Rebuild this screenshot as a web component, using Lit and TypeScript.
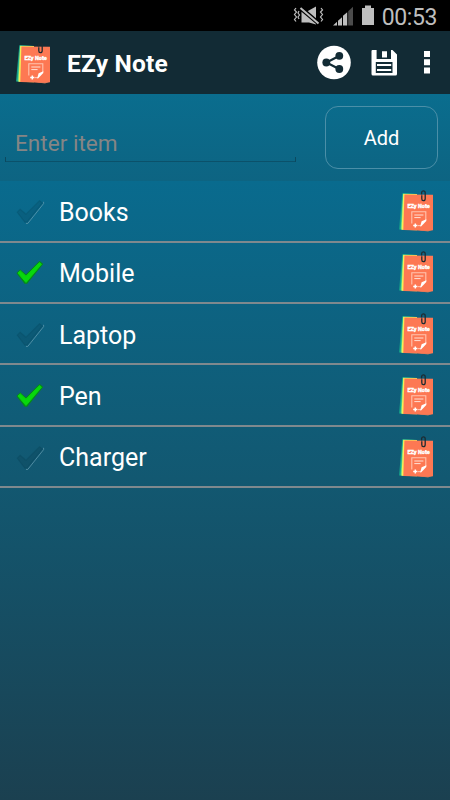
import { LitElement, html, css, svg } from "lit";
import { customElement, property, state } from "lit/decorators.js";

@customElement("note-icon")
class NoteIcon extends LitElement {
  static styles = css`
    :host { display: block; width: 38px; height: 48px; flex: none; }
    svg { display: block; }
    .label { font: 900 6px Roboto, sans-serif; fill: #fff; stroke: #fff; stroke-width: 0.3; }
  `;
  render() {
    return html`<svg width="38" height="48" viewBox="0 0 38 48">
      <path d="M5.3 6.2 L20 7 L20 43 L2 42.4Z" fill="#16a08a" />
      <path d="M6 6.6 L20 7 L20 43 L3.6 42.4Z" fill="#5fd68a" />
      <path d="M6.2 7 L20 7 L20 43.2 L4.6 42.8Z" fill="#f6ee58" />
      <path d="M20 43 L35 43 L31 44.6Z" fill="#b07a62" />
      <path d="M7.4 7.4 L36 7.7 L36 43.2 Q30 44.2 22 43.6 L6.3 43Z" fill="#fd7853" />
      <text class="label" x="10.4" y="20.8" textLength="22.4" lengthAdjust="spacingAndGlyphs">EZy Note</text>
      <path d="M14.8 36.5 V24.8 H28.8 V33" fill="none" stroke="#ffc4b0" stroke-width="1.1" />
      <path d="M21 38.6 H24" stroke="#ffc4b0" stroke-width="1.1" />
      <path d="M17.3 28 H26.4 M17.3 30.6 H23.6" stroke="#ffe0d5" stroke-width="1" />
      <path d="M29.3 32.2 L29.3 34 L24 39.4 L23.2 39.2 L24.6 34.2Z" fill="#fff" />
      <path d="M18.3 36.4 V40.6 M16.2 38.5 H20.4" stroke="#fff" stroke-width="1.5" />
      <path d="M24.6 7.5 V5.8 Q24.6 3.9 26.3 3.9 Q28.2 3.9 28.2 5.8 V11.8 Q28.2 13.7 26.3 13.7 Q24.8 13.7 24.8 11.8 V8.2" fill="none" stroke="#1d2b31" stroke-width="1.3" />
    </svg>`;
  }
}

@customElement("check-mark")
class CheckMark extends LitElement {
  @property({ type: Boolean }) done = false;
  static styles = css`
    :host { display: block; width: 30px; height: 26px; flex: none; }
    svg { display: block; }
  `;
  render() {
    const shape = "M2.2 13.2 L5.2 10.2 L11 15.2 L24.6 1.6 L27.4 4 L12 23.2 L9.8 23.2Z";
    return html`<svg width="30" height="26" viewBox="0 0 30 26">
      ${this.done
        ? svg`
          <path d=${shape} fill="#078a1c" stroke="#078a1c" stroke-width="1.2" stroke-linejoin="round" />
          <path d="M3 13 L5.3 10.9 L11 16.2 L24.5 2.6 L26.4 4.2 L11 22.4Z" fill="#08d80c" stroke="#08d80c" stroke-width="1" stroke-linejoin="round" />`
        : svg`
          <path d="M11 24.4 L12.8 24.4 L28.6 4.6 L28.6 2.8" fill="none" stroke="#6a9fb3" stroke-opacity=".7" stroke-width="1" />
          <path d=${shape} fill="#000" fill-opacity=".08" stroke="#003a50" stroke-opacity=".2" stroke-width="1.2" stroke-linejoin="round" />`}
    </svg>`;
  }
}

@customElement("app-root")
class AppRoot extends LitElement {
  @state() private items = [
    { name: "Books", done: false },
    { name: "Mobile", done: true },
    { name: "Laptop", done: false },
    { name: "Pen", done: true },
    { name: "Charger", done: false },
  ];

  static styles = css`
    :host {
      display: flex; flex-direction: column; width: 450px; height: 800px; overflow: hidden;
      box-sizing: border-box; font-family: Roboto, sans-serif; color: #fff; background: #000;
    }
    .status { height: 31px; flex: none; display: flex; align-items: center; justify-content: flex-end; padding-right: 13px; box-sizing: border-box; }
    .status svg { display: block; }
    .clock { font-size: 23px; line-height: 31px; color: #bebebe; margin: 3px 0 0 7px; letter-spacing: -0.4px; }
    .bar { height: 63px; flex: none; display: flex; align-items: center; background: #122b35; padding-left: 14px; box-sizing: border-box; }
    .title { flex: 1; margin: 2px 0 0 15px; font-size: 24.5px; font-weight: 700; line-height: 30px; letter-spacing: 0.2px; }
    .actions { display: block; }
    .form {
      height: 87px; flex: none; display: flex; box-sizing: border-box; padding: 12px 12px 0 5px; justify-content: space-between;
      background: linear-gradient(#0a6d8e, #0d6482);
    }
    .field {
      width: 291px; height: 56px; box-sizing: border-box; padding: 24px 0 0 10px;
      font-size: 22.6px; line-height: 27px; color: #858585;
      background:
        linear-gradient(#0b4a60, #0b4a60) left bottom / 1px 5px no-repeat,
        linear-gradient(#0b4a60, #0b4a60) right bottom / 1px 5px no-repeat,
        linear-gradient(#0b516a, #0b516a) left bottom / 100% 1px no-repeat;
    }
    .add {
      width: 113px; height: 63px; box-sizing: border-box; border: 1.5px solid #4b8fa8; border-radius: 13px; background: none;
      color: #fff; font: 20px/24px Roboto, sans-serif; padding: 0; text-align: center;
    }
    .list { flex: 1; background: linear-gradient(#096b8e 0%, #125871 48%, #1b4050 100%); }
    .row {
      height: 61.35px; box-sizing: border-box; display: flex; align-items: center;
      padding: 0 15px 0 15px; border-bottom: 2px solid #7f898e;
    }
    .row:first-child { height: 61.8px; }
    .name { flex: 1; margin: 3.6px 0 0 14px; font-size: 25px; line-height: 30px; }
    check-mark { margin-top: 2px; }
  `;

  render() {
    return html`
      <div class="status">
        <svg width="84" height="31" viewBox="291 0 84 31">
          <g fill="none" stroke="#bebebe" stroke-width="1.2">
            <path d="M296 8 l-1.5 2 l2 2 l-2 2.5 l2 2.5 l-2 2.5 l1.5 2" />
            <path d="M299 11 l-1 2 l1.5 2 l-1.5 2 l1 2" />
            <path d="M321 8 l1.5 2 l-2 2 l2 2.5 l-2 2.5 l2 2.5 l-1.5 2" />
          </g>
          <path d="M301.5 11.5 H307 L316 6.5 V24.5 L309 22.5 H301.5Z" fill="#bebebe" />
          <path d="M300 7.5 L319 23.7" stroke="#000" stroke-width="4.4" />
          <path d="M300.5 8 L318.5 23.4" stroke="#bebebe" stroke-width="2" />
          <g fill="#bebebe">
            <path d="M333 25.5 L337 21.8 V25.5Z M338 25.5 V20.8 L342 17.2 V25.5Z M343 25.5 V15.8 L347.2 12.2 V25.5Z" />
            <path d="M348.2 25.5 V11.2 L353 6.8 V25.5Z" fill="#4b4b4b" />
            <path d="M365 5.5 H371 V8 H374 V25 H362 V8 H365Z" />
          </g>
        </svg>
        <div class="clock">00:53</div>
      </div>
      <div class="bar">
        <note-icon></note-icon>
        <div class="title">EZy Note</div>
        <svg class="actions" width="134" height="63" viewBox="316 31 134 63">
          <circle cx="334" cy="62.5" r="16.8" fill="#fff" />
          <path d="M339 56 L326.5 62.5 L339 69" fill="none" stroke="#122b35" stroke-width="2.2" />
          <g fill="#122b35"><circle cx="339.3" cy="55.8" r="3.9" /><circle cx="326.3" cy="62.5" r="3.9" /><circle cx="339.3" cy="69" r="3.9" /></g>
          <path fill="#fff" fill-rule="evenodd" d="M372.5 50 H376.6 V59 H391 V50 H392.5 L397 54.5 V74 Q397 75.5 395.5 75.5 H373 Q371.5 75.5 371.5 74 V51 Q371.5 50 372.5 50Z M375.8 62 V73 H392.5 V62Z" />
          <path fill="#fff" d="M382 51.3 H387 V57.5 H382Z M377 64 H391.2 V66 H377Z M377 69 H391.2 V71 H377Z" />
          <path fill="#fff" d="M424 51 H430 V57 H424Z M424 59.3 H430 V65.3 H424Z M424 67.6 H430 V73.6 H424Z" />
        </svg>
      </div>
      <div class="form">
        <div class="field">Enter item</div>
        <button class="add">Add</button>
      </div>
      <div class="list">
        ${this.items.map((item) => html`
          <div class="row">
            <check-mark ?done=${item.done}></check-mark>
            <div class="name">${item.name}</div>
            <note-icon></note-icon>
          </div>`)}
      </div>
    `;
  }
}
